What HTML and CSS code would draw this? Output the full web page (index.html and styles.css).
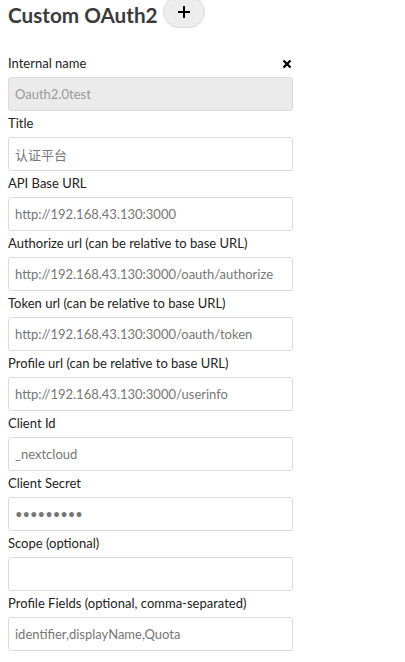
FILE: index.html
```html
<!DOCTYPE html>
<html lang="en">
<head>
<meta charset="utf-8">
<title>Custom OAuth2</title>
<link rel="stylesheet" href="styles.css">
</head>
<body>
<div class="page">
  <div class="heading-row">
    <h2 class="heading">Custom OAuth2</h2>
    <button class="add-btn" type="button" aria-label="Add">
      <svg width="14" height="14" viewBox="0 0 14 14"><path d="M7 1v12M1 7h12" stroke="#000" stroke-width="2" fill="none"/></svg>
    </button>
  </div>
  <form class="provider">
    <div class="field">
      <div class="label-row">
        <label class="label">Internal name</label>
        <span class="close" aria-label="Remove">
          <svg width="10" height="10" viewBox="0 0 10 10"><path d="M1.5 1.5l7 7M8.5 1.5l-7 7" stroke="#000" stroke-width="2.2" fill="none"/></svg>
        </span>
      </div>
      <input class="input" type="text" value="Oauth2.0test" disabled>
    </div>
    <div class="field">
      <label class="label">Title</label>
      <input class="input" type="text" value="认证平台">
    </div>
    <div class="field">
      <label class="label">API Base URL</label>
      <input class="input" type="text" value="http://192.168.43.130:3000">
    </div>
    <div class="field">
      <label class="label">Authorize url (can be relative to base URL)</label>
      <input class="input" type="text" value="http://192.168.43.130:3000/oauth/authorize">
    </div>
    <div class="field">
      <label class="label">Token url (can be relative to base URL)</label>
      <input class="input" type="text" value="http://192.168.43.130:3000/oauth/token">
    </div>
    <div class="field">
      <label class="label">Profile url (can be relative to base URL)</label>
      <input class="input" type="text" value="http://192.168.43.130:3000/userinfo">
    </div>
    <div class="field">
      <label class="label">Client Id</label>
      <input class="input" type="text" value="_nextcloud">
    </div>
    <div class="field">
      <label class="label">Client Secret</label>
      <input class="input" type="password" value="123456789">
    </div>
    <div class="field">
      <label class="label">Scope (optional)</label>
      <input class="input" type="text" value="">
    </div>
    <div class="field">
      <label class="label">Profile Fields (optional, comma-separated)</label>
      <input class="input" type="text" value="identifier,displayName,Quota">
    </div>
  </form>
</div>
</body>
</html>
```

FILE: styles.css
```css
html, body {
  margin: 0;
  padding: 0;
  background: #fff;
}
body {
  font-family: Lato, "Noto Sans CJK SC", sans-serif;
  color: #222;
  font-size: 13px;
}
.page {
  padding: 0 8px;
}
.heading-row {
  display: flex;
  align-items: flex-start;
  gap: 5px;
  height: 30px;
}
.heading {
  margin: 0;
  font-size: 20.7px;
  line-height: 30px;
  font-weight: 700;
  color: #3b3b3b;
}
.add-btn {
  width: 42px;
  height: 32px;
  margin-top: -4px;
  border: 1px solid #dbdbdb;
  border-radius: 16px;
  background: #ededed;
  display: flex;
  align-items: center;
  justify-content: center;
  padding: 0;
}
.provider {
  margin-top: 24px;
  width: 285px;
}
.field {
  display: flex;
  flex-direction: column;
  margin-bottom: 3px;
}
.label-row {
  display: flex;
  justify-content: space-between;
  align-items: flex-start;
}
.label {
  display: block;
  line-height: 18px;
  height: 18px;
  padding-bottom: 2px;
  margin-bottom: 3px;
  color: #222;
}
.close {
  display: flex;
  margin-right: 1px;
  margin-top: 5px;
}
.input {
  box-sizing: border-box;
  width: 285px;
  height: 34px;
  margin: 0;
  padding: 0 6px;
  border: 1px solid #dbdbdb;
  border-radius: 3px;
  background: #fff;
  font-family: Lato, "Noto Sans CJK SC", sans-serif;
  font-size: 13px;
  color: #767676;
  outline: none;
}
.input:disabled {
  background: #ebebeb;
  color: #9a9a9a;
}
```
